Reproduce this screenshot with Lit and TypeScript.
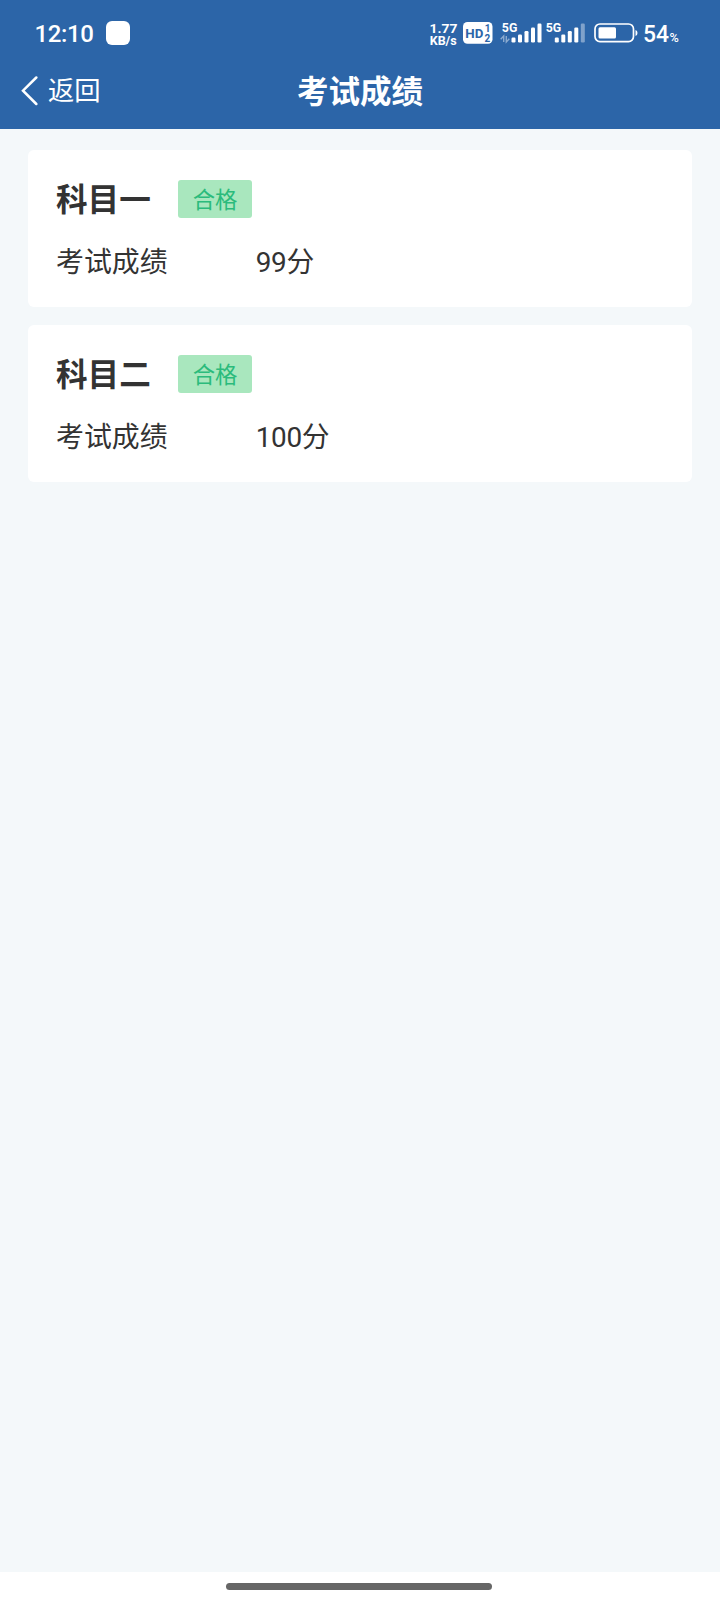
import { LitElement, html, css, svg } from "lit";
import { customElement, property } from "lit/decorators.js";

@customElement("status-bar")
class StatusBar extends LitElement {
  static styles = css`
    :host { display: flex; align-items: center; height: 66px; padding: 0 41px 0 34.5px; box-sizing: border-box; color: #fff; }
    .time { font-size: 24px; font-weight: 500; line-height: 28px; letter-spacing: -0.4px; width: 71px; padding-top: 2px; }
    .app { width: 24px; height: 24px; border-radius: 6px; background: #fff; }
    .icons { margin-left: auto; display: block; }
    text { font-family: Roboto, sans-serif; fill: #fff; font-weight: 700; }
    .ink { fill: #2c65a8; }
    .level { font-weight: 500; }
  `;
  render() {
    const bars = (x: number, dim: boolean) =>
      [5, 8, 11.5, 15, 19].map((h, i) => svg`<rect x=${x + i * 6.5} y=${42.5 - h} width="4" height=${h} rx="1.2" fill="#fff" opacity=${dim && i === 4 ? 0.4 : 1}></rect>`);
    return html`
      <span class="time">12:10</span>
      <span class="app"></span>
      <svg class="icons" width="251" height="66" viewBox="428 0 251 66">
        <text x="429.5" y="32.6" font-size="13" textLength="28" lengthAdjust="spacingAndGlyphs">1.77</text>
        <text x="429.7" y="45" font-size="12" textLength="27" lengthAdjust="spacingAndGlyphs">KB/s</text>
        <rect x="463" y="22" width="29.5" height="21.7" rx="4.5" fill="#fff"></rect>
        <text class="ink" x="465.3" y="37.6" font-size="13.5" textLength="18" lengthAdjust="spacingAndGlyphs">HD</text>
        <text class="ink" x="484.8" y="32.3" font-size="10">1</text>
        <text class="ink" x="484.5" y="41.9" font-size="10">2</text>
        <text x="501.8" y="31.8" font-size="12.5" textLength="15.5" lengthAdjust="spacingAndGlyphs">5G</text>
        <path d="M503.7 42v-6l-3 3.2M506.3 36v6l3-3.2" fill="none" stroke="#fff" stroke-width="1.4" opacity=".45"></path>
        ${bars(511.5, false)}
        <text x="545.7" y="31.8" font-size="12.5" textLength="15.5" lengthAdjust="spacingAndGlyphs">5G</text>
        ${bars(554.8, true)}
        <rect x="595" y="24" width="38.5" height="17.6" rx="5" fill="none" stroke="#fff" stroke-width="1.7"></rect>
        <rect x="598.5" y="27.2" width="17.5" height="11.4" rx="1.5" fill="#fff"></rect>
        <path d="M635.5 30q2 .4 2 3t-2 3z" fill="#fff"></path>
        <text class="level" x="643" y="42" font-size="24" textLength="26" lengthAdjust="spacingAndGlyphs">54</text>
        <text class="level" x="669.5" y="41.5" font-size="12.5" textLength="9.3" lengthAdjust="spacingAndGlyphs">%</text>
      </svg>
    `;
  }
}

@customElement("nav-bar")
class NavBar extends LitElement {
  static styles = css`
    :host { display: grid; grid-template-columns: 1fr auto 1fr; align-items: center; height: 63px; padding: 0 20px 14px; box-sizing: border-box; color: #fff; }
    .back { display: flex; align-items: center; gap: 9.5px; font-size: 26.3px; line-height: 36px; }
    .title { font-size: 31.5px; line-height: 40px; font-weight: 700; padding-top: 4px; }
    svg { display: block; }
  `;
  render() {
    return html`
      <div class="back">
        <svg width="18.5" height="30" viewBox="0 0 18.5 30"><path d="M16.3 1.5 3 14.7 16.3 28" fill="none" stroke="#fff" stroke-width="2.5" stroke-linecap="round"></path></svg>
        <span>返回</span>
      </div>
      <div class="title">考试成绩</div>
    `;
  }
}

@customElement("score-card")
class ScoreCard extends LitElement {
  @property() subject = "";
  @property() score = "";
  static styles = css`
    :host { display: block; height: 157.3px; box-sizing: border-box; padding: 30.3px 28px 0; background: #fff; border-radius: 6px; color: #333; }
    .head { display: flex; align-items: center; height: 38px; gap: 27.3px; }
    .subject { font-size: 31.6px; font-weight: 700; line-height: 38px; padding-top: 4px; }
    .badge { width: 74px; height: 38px; line-height: 38px; padding-top: 1px; box-sizing: border-box; text-align: center; font-size: 22.4px; color: #2bbb7c; background: #a9e7be; border-radius: 3px; }
    .row { display: flex; font-size: 27.9px; line-height: 38px; margin-top: 25.7px; }
    .label { width: 199.7px; }
    .value { letter-spacing: -0.3px; }
  `;
  render() {
    return html`
      <div class="head"><span class="subject">${this.subject}</span><span class="badge">合格</span></div>
      <div class="row"><span class="label">考试成绩</span><span class="value">${this.score}分</span></div>
    `;
  }
}

@customElement("app-root")
class AppRoot extends LitElement {
  static styles = css`
    :host { display: flex; flex-direction: column; height: 1600px; background: #f4f8fa; font-family: Roboto, "Noto Sans CJK SC", sans-serif; }
    .header { background: #2c65a8; height: 129px; }
    .list { flex: 1; display: flex; flex-direction: column; gap: 17.7px; padding: 21px 28px 0; }
    .home { height: 28px; background: #fff; display: flex; justify-content: center; align-items: flex-start; }
    .pill { width: 266px; height: 6.5px; margin: 11px 3px 0 0; border-radius: 4px; background: #666; }
  `;
  render() {
    return html`
      <div class="header"><status-bar></status-bar><nav-bar></nav-bar></div>
      <div class="list">
        <score-card subject="科目一" score="99"></score-card>
        <score-card subject="科目二" score="100"></score-card>
      </div>
      <div class="home"><div class="pill"></div></div>
    `;
  }
}
